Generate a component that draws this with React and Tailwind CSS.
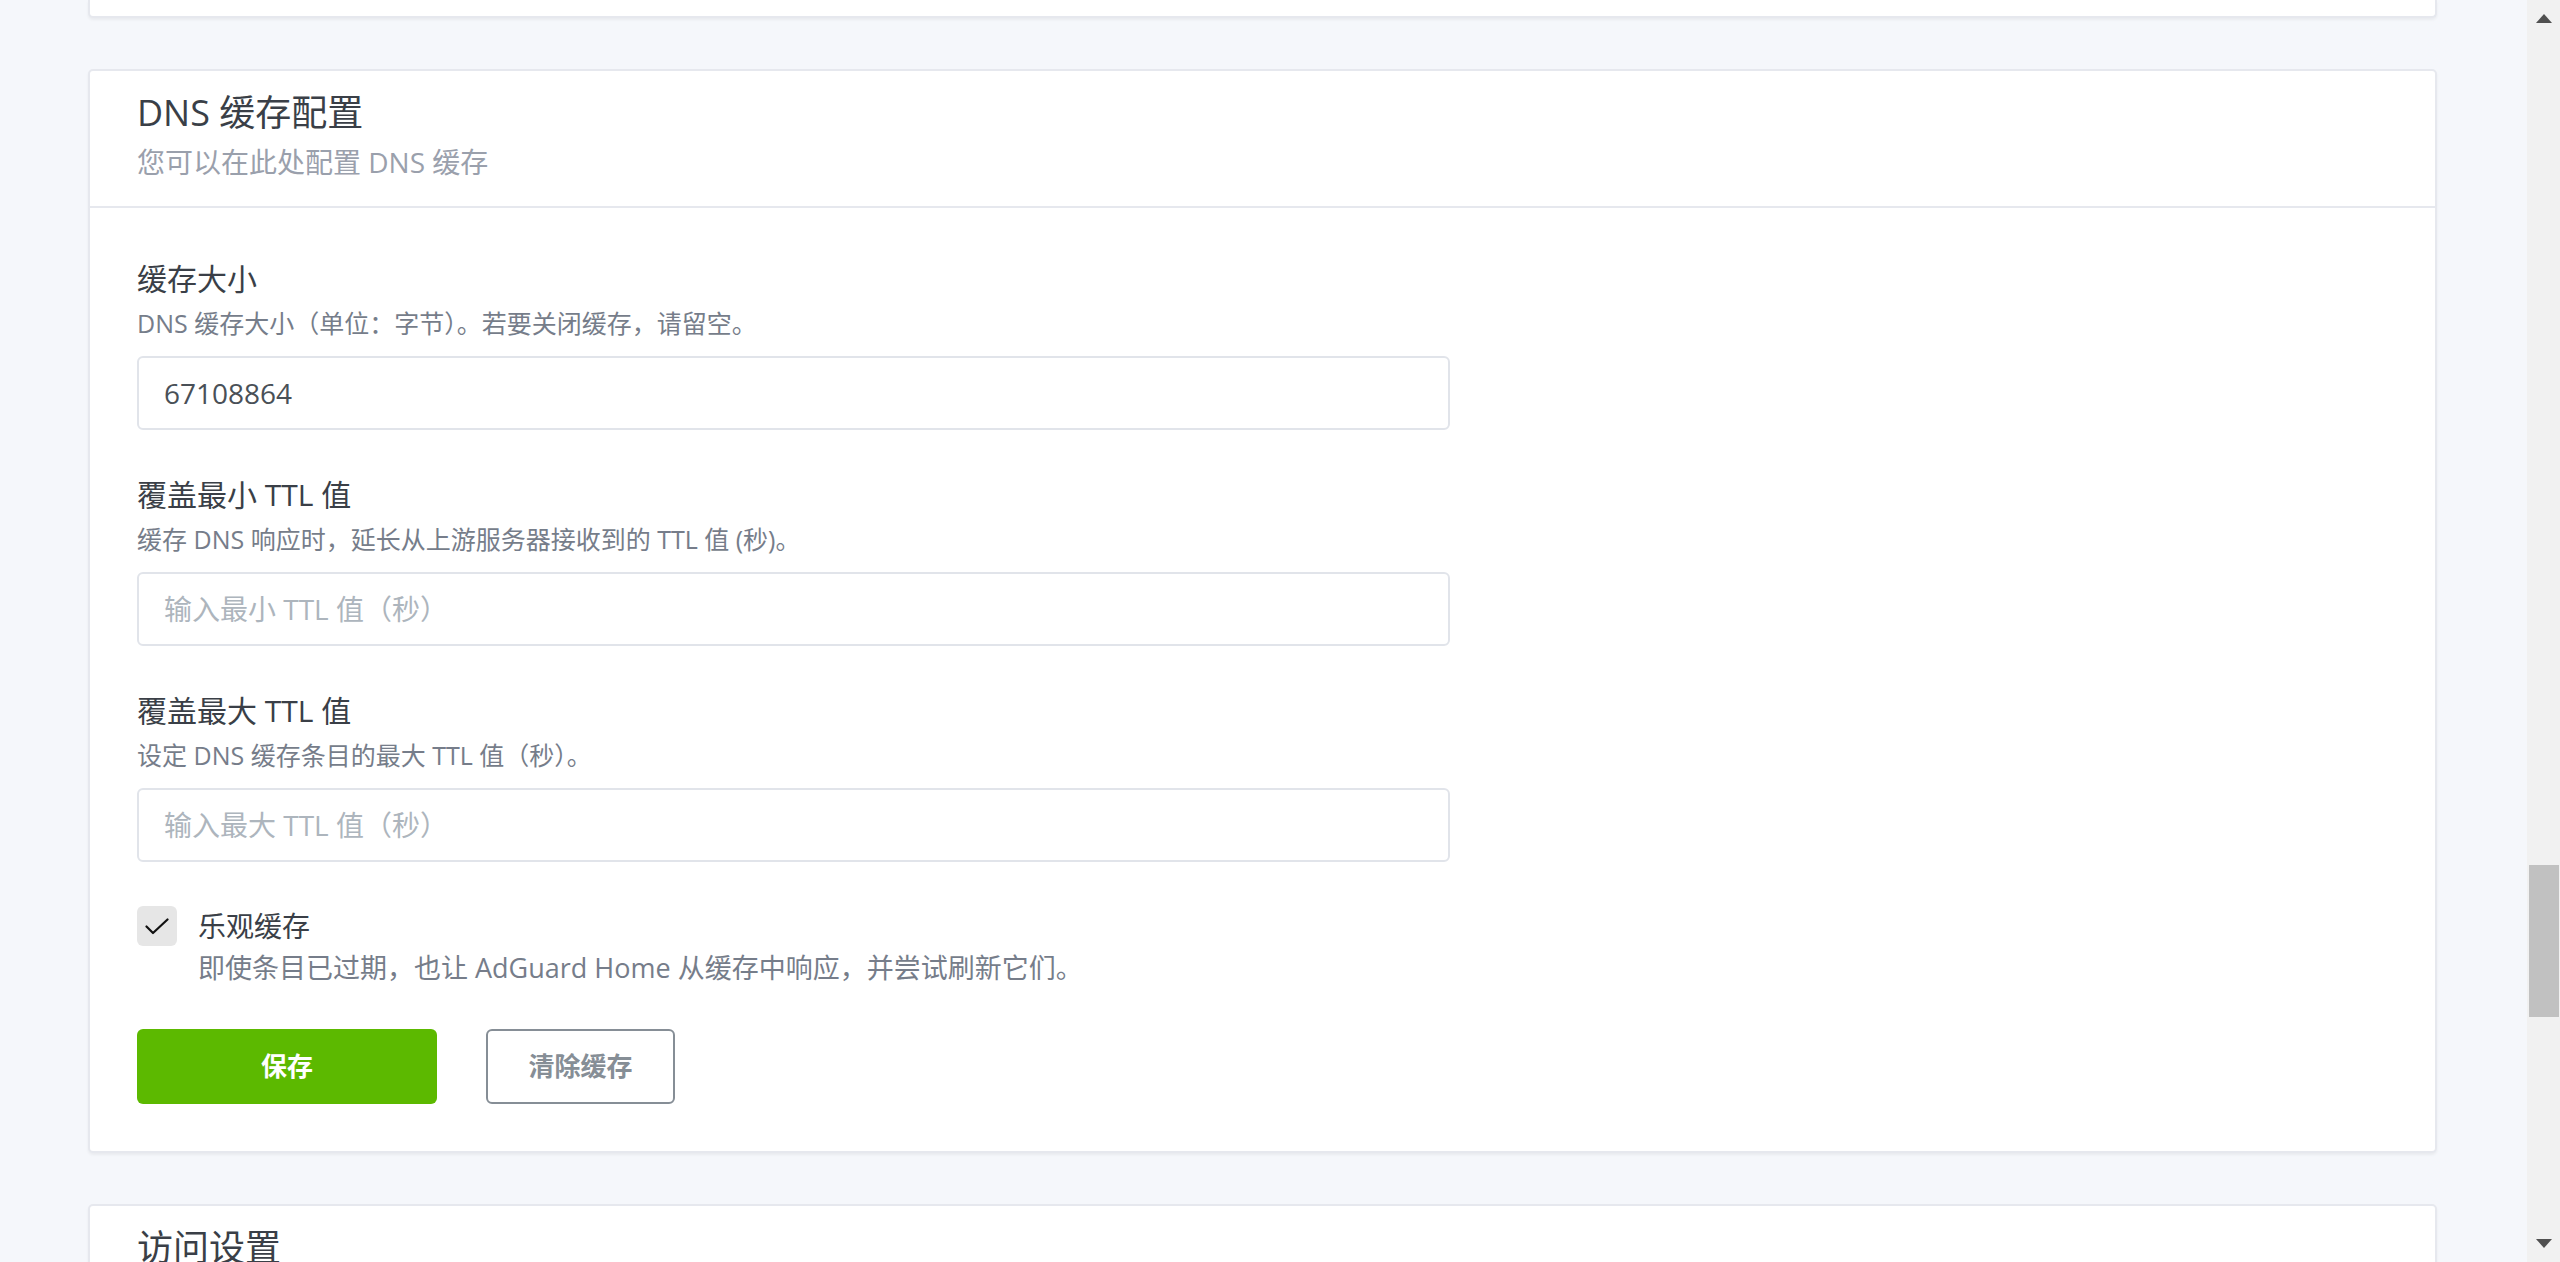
const font = { fontFamily: '"Open Sans", "Noto Sans CJK SC", sans-serif' };

const Field = ({ label, desc, value, placeholder }) => (
  <div className="mb-[47px]">
    <div className="text-[30px] leading-[36px] text-[#3a3f47]">{label}</div>
    <div className="mt-[10px] text-[25px] leading-[32px] text-[#767d8a]">{desc}</div>
    <input
      className="mt-[17px] block h-[74px] w-[1313px] rounded-[6px] border-2 border-[#e1e4ea] bg-white px-[25px] text-[28px] text-[#495057] placeholder:text-[#adb5bd] outline-none"
      defaultValue={value}
      placeholder={placeholder}
      style={font}
    />
  </div>
);

const CardHeader = ({ title, subtitle }) => (
  <div className="border-b-2 border-[#e6e8ee] px-[47px] pt-[22px] pb-[27px]">
    <h2 className="text-[36px] leading-[40px] text-[#3a3f47]">{title}</h2>
    {subtitle && <p className="mt-[12px] text-[28px] leading-[34px] text-[#9aa0ac]">{subtitle}</p>}
  </div>
);

export default function App() {
  return (
    <div className="flex h-[1262px] w-[2560px] overflow-hidden bg-[#f5f7fb]" style={font}>
      <div className="flex-1 pl-[88px] pr-[90px]">
        {/* previous card, mostly scrolled away */}
        <div className="h-[18px] rounded-b-[5px] border-2 border-t-0 border-[#e6e8ee] bg-white shadow-[0_2px_3px_rgba(0,0,0,0.05)]"></div>

        <div className="mt-[51px] rounded-[5px] border-2 border-[#e6e8ee] bg-white shadow-[0_2px_3px_rgba(0,0,0,0.05)]">
          <CardHeader title="DNS 缓存配置" subtitle="您可以在此处配置 DNS 缓存" />
          <div className="px-[47px] pt-[53px] pb-[47px]">
            <Field label="缓存大小" desc="DNS 缓存大小（单位：字节）。若要关闭缓存，请留空。" value="67108864" />
            <Field label="覆盖最小 TTL 值" desc="缓存 DNS 响应时，延长从上游服务器接收到的 TTL 值 (秒)。" placeholder="输入最小 TTL 值（秒）" />
            <Field label="覆盖最大 TTL 值" desc="设定 DNS 缓存条目的最大 TTL 值（秒）。" placeholder="输入最大 TTL 值（秒）" />

            <div className="-mt-[3px] flex items-start">
              <div className="flex h-[40px] w-[40px] shrink-0 items-center justify-center rounded-[6px] bg-[#e6e6e6]">
                <svg width="24" height="17" viewBox="0 0 24 17" fill="none">
                  <path d="M1.5 8.5 L8 15 L22.5 1.5" stroke="#111" strokeWidth="2.2" strokeLinecap="round" strokeLinejoin="round" />
                </svg>
              </div>
              <div className="ml-[21px]">
                <div className="pt-[1px] text-[28px] leading-[38px] text-[#3a3f47]">乐观缓存</div>
                <div className="mt-[6px] text-[27px] leading-[34px] text-[#767d8a]">即使条目已过期，也让 AdGuard Home 从缓存中响应，并尝试刷新它们。</div>
              </div>
            </div>

            <div className="mt-[44px] flex gap-[49px]">
              <button className="h-[75px] w-[300px] rounded-[6px] bg-[#5cb900] text-[26px] font-bold text-white">保存</button>
              <button className="h-[75px] w-[189px] rounded-[6px] border-2 border-[#868e96] bg-white text-[26px] font-bold text-[#868e96]">清除缓存</button>
            </div>
          </div>
        </div>

        <div className="mt-[51px] rounded-[5px] border-2 border-[#e6e8ee] bg-white shadow-[0_2px_3px_rgba(0,0,0,0.05)]">
          <CardHeader title="访问设置" />
          <div className="h-[400px]"></div>
        </div>
      </div>

      {/* scrollbar */}
      <div className="flex w-[33px] flex-col items-center bg-[#f1f1f1]">
        <div className="flex h-[36px] items-center justify-center">
          <svg width="16" height="9" viewBox="0 0 16 9"><path d="M8 0 L16 9 L0 9 Z" fill="#505050" /></svg>
        </div>
        <div className="mt-[829px] h-[152px] w-[30px] bg-[#c1c1c1]"></div>
        <div className="flex-1"></div>
        <div className="flex h-[38px] items-center justify-center">
          <svg width="16" height="9" viewBox="0 0 16 9"><path d="M0 0 L16 0 L8 9 Z" fill="#505050" /></svg>
        </div>
      </div>
    </div>
  );
}
